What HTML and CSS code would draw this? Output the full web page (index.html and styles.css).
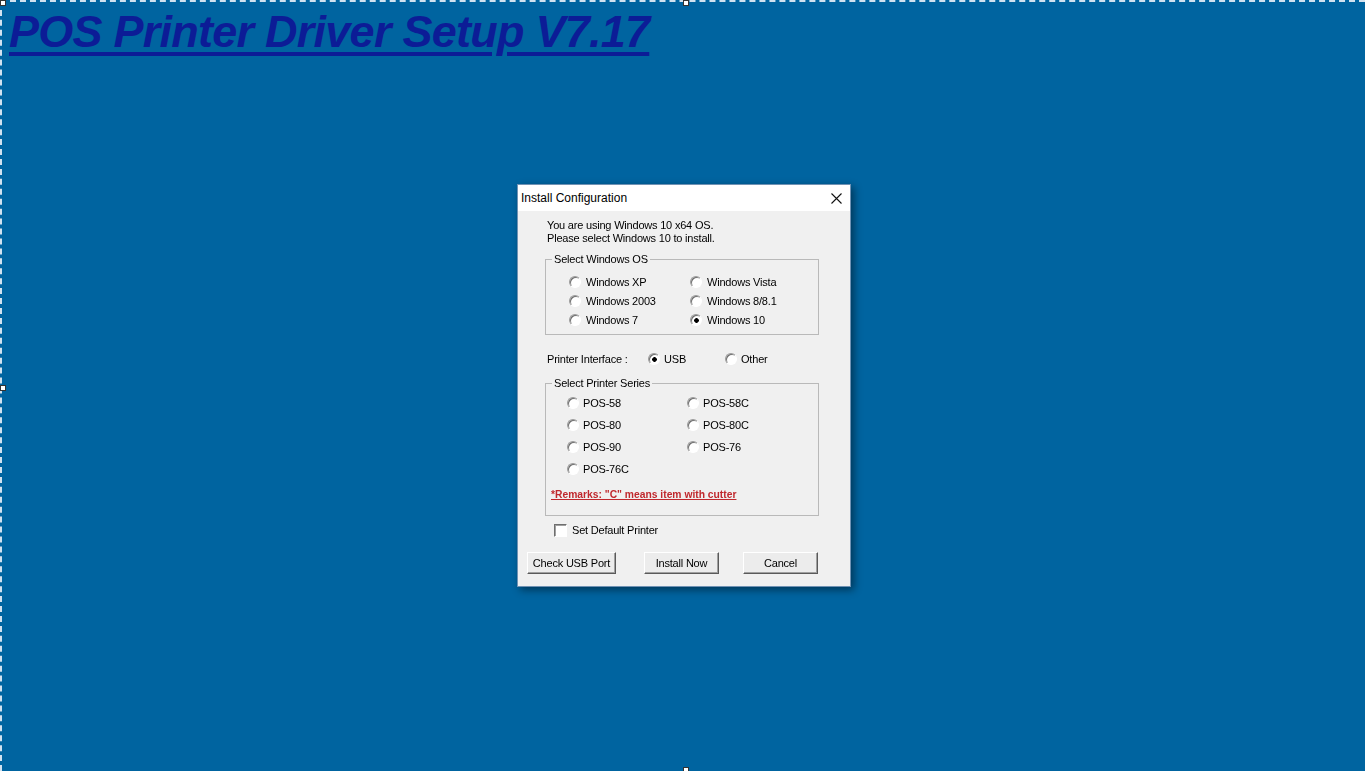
FILE: index.html
```html
<!DOCTYPE html>
<html lang="en">
<head>
    <meta charset="UTF-8">
    <meta name="viewport" content="width=device-width, initial-scale=1.0">
    <title>POS Printer Driver Setup V7.17</title>
    <link rel="stylesheet" href="styles.css">
</head>
<body>
    <div class="frame">
        <h1 class="page-title">POS Printer Driver Setup V7.17</h1>
        <span class="handle handle-corner"></span>
        <span class="handle handle-top"></span>
        <span class="handle handle-left"></span>
        <span class="handle handle-bottom"></span>
    </div>

    <div class="modal">
        <div class="dialog">
            <div class="titlebar">
                <span class="title">Install Configuration</span>
                <svg class="close" width="11" height="11" viewBox="0 0 11 11">
                    <path d="M0.5 0.5 L10.5 10.5 M10.5 0.5 L0.5 10.5" stroke="#111" stroke-width="1.1" fill="none"/>
                </svg>
            </div>

            <div class="dialog-body">
                <p class="intro">You are using Windows 10 x64 OS.<br>Please select Windows 10 to install.</p>

                <fieldset class="group group-os">
                    <legend>Select Windows OS</legend>
                    <div class="options">
                        <label class="opt"><span class="radio"></span>Windows XP</label>
                        <label class="opt"><span class="radio"></span>Windows Vista</label>
                        <label class="opt"><span class="radio"></span>Windows 2003</label>
                        <label class="opt"><span class="radio"></span>Windows 8/8.1</label>
                        <label class="opt"><span class="radio"></span>Windows 7</label>
                        <label class="opt"><span class="radio on"></span>Windows 10</label>
                    </div>
                </fieldset>

                <div class="interface">
                    <span class="interface-label">Printer Interface :</span>
                    <label class="opt opt-usb"><span class="radio on"></span>USB</label>
                    <label class="opt"><span class="radio"></span>Other</label>
                </div>

                <fieldset class="group group-series">
                    <legend>Select Printer Series</legend>
                    <div class="options">
                        <label class="opt"><span class="radio"></span>POS-58</label>
                        <label class="opt"><span class="radio"></span>POS-58C</label>
                        <label class="opt"><span class="radio"></span>POS-80</label>
                        <label class="opt"><span class="radio"></span>POS-80C</label>
                        <label class="opt"><span class="radio"></span>POS-90</label>
                        <label class="opt"><span class="radio"></span>POS-76</label>
                        <label class="opt"><span class="radio"></span>POS-76C</label>
                    </div>
                    <p class="remarks">*Remarks: "C" means item with cutter</p>
                </fieldset>

                <label class="default-printer"><span class="checkbox"></span>Set Default Printer</label>

                <div class="buttons">
                    <button class="btn btn-wide">Check USB Port</button>
                    <button class="btn btn-install">Install Now</button>
                    <button class="btn btn-cancel">Cancel</button>
                </div>
            </div>
        </div>
    </div>
</body>
</html>
```

FILE: styles.css
```css
html, body {
    margin: 0;
    height: 100%;
}
body {
    background-color: #0064a0; /* синий фон рабочей области */
    font-family: "Liberation Sans", Arial, sans-serif;
    overflow: hidden;
}
.frame {
    position: relative;
    height: 100%;
    box-sizing: border-box;
    border-top: 2px dashed #d2e2f0;
    border-left: 2px dashed #d2e2f0;
}
.page-title {
    margin: 7px 0 0 7px;
    font-size: 45px;
    line-height: 46px;
    font-weight: bold;
    font-style: italic;
    letter-spacing: -0.75px;
    color: #0c1c96;
    text-decoration: underline;
    text-decoration-thickness: 4px;
    text-underline-offset: 5px;
    display: inline-block;
}
.handle {
    position: absolute;
    width: 4px;
    height: 4px;
    background: #fff;
    border: 1px solid #333;
}
.handle-corner { top: -2px; left: -2px; }
.handle-top { top: -2px; left: 681px; }
.handle-left { top: 383px; left: -2px; }
.handle-bottom { bottom: -2px; left: 681px; }

.modal {
    position: fixed;
    inset: 0;
    padding-left: 3px;
    display: flex;
    align-items: center;
    justify-content: center;
}
.dialog {
    width: 334px;
    box-sizing: border-box;
    border: 1px solid #7092b4;
    background: #f0f0f0;
    box-shadow: 3px 3px 8px rgba(0, 0, 0, 0.45);
    font-size: 11px;
    letter-spacing: -0.2px;
    color: #000;
}
.titlebar {
    height: 26px;
    background: #fff;
    display: flex;
    align-items: center;
    justify-content: space-between;
    padding: 0 8px 0 3px;
}
.title {
    font-size: 12px;
    letter-spacing: 0;
}
.dialog-body {
    padding: 8px 9px 12px;
}
.intro {
    margin: 0 0 0 20px;
    line-height: 13px;
}
.group {
    margin: 8px 22px 0 18px;
    padding: 0;
    border: 1px solid #b9b9b9;
    border-radius: 0;
    min-width: 0;
}
.group legend {
    margin-left: 6px;
    padding: 0 2px;
    line-height: 13px;
}
.options {
    display: grid;
    grid-template-columns: 121px 121px;
    padding-left: 23px;
}
.group-os .options {
    padding-top: 6px;
    padding-bottom: 5px;
    grid-auto-rows: 19px;
}
.group-series {
    margin-top: 11px;
}
.group-series .options {
    grid-template-columns: 120px 120px;
    padding-left: 21px;
    padding-top: 2px;
    grid-auto-rows: 22px;
}
.opt {
    display: flex;
    align-items: center;
    gap: 5px;
}
.group-series .opt {
    gap: 4px;
}
.radio {
    width: 12px;
    height: 12px;
    box-sizing: border-box;
    border-radius: 50%;
    border: 1px solid;
    border-color: #9a9a9a #fff #fff #9a9a9a;
    background: #fff;
    box-shadow: inset 1px 1px 0 #6e6e6e;
    flex: none;
}
.radio.on {
    background: radial-gradient(circle at 55% 55%, #000 0 2px, #fff 2.6px);
}
.remarks {
    margin: 8px 0 13px 5px;
    line-height: 14px;
    font-size: 10.3px;
    font-weight: bold;
    letter-spacing: 0;
    color: #c0282d;
    text-decoration: underline;
}
.interface {
    display: flex;
    align-items: center;
    margin: 17px 0 0 20px;
    line-height: 14px;
}
.interface .opt {
    gap: 4px;
}
.interface-label {
    width: 101px;
}
.opt-usb {
    width: 77px;
}
.default-printer {
    display: flex;
    align-items: center;
    gap: 5px;
    margin: 7px 0 0 27px;
    line-height: 14px;
}
.checkbox {
    width: 13px;
    height: 13px;
    box-sizing: border-box;
    border: 1px solid;
    border-color: #6e6e6e #fff #fff #6e6e6e;
    box-shadow: inset 1px 1px 0 #a0a0a0;
    background: #fff;
}
.buttons {
    display: flex;
    margin-top: 15px;
}
.btn {
    height: 22px;
    padding: 0;
    font-family: "Liberation Sans", Arial, sans-serif;
    font-size: 11px;
    letter-spacing: -0.2px;
    color: #000;
    background: #ececec;
    border: 1px solid;
    border-color: #fff #5a5a5a #5a5a5a #fff;
    box-shadow: inset -1px -1px 0 #a0a0a0;
}
.btn-wide { width: 89px; }
.btn-install { width: 75px; margin-left: 28px; }
.btn-cancel { width: 75px; margin-left: 24px; }
```
